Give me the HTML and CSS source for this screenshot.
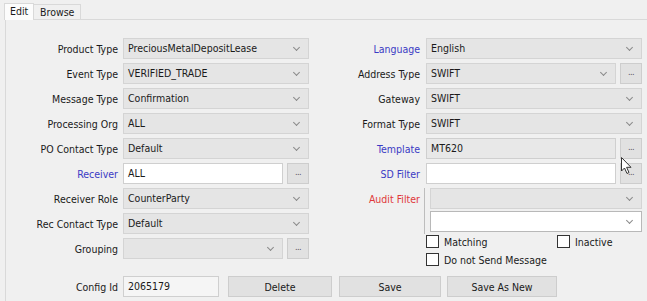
FILE: index.html
```html
<!DOCTYPE html>
<html lang="en">
<head>
  <meta charset="UTF-8">
  <title>Message Config</title>
  <link rel="stylesheet" href="styles.css">
</head>
<body>

  <div class="tabs">
    <span class="tab is-active">Edit</span>
    <span class="tab">Browse</span>
  </div>

  <div class="panel">
    <div class="form">

      <div class="col is-left">
        <label class="label">Product Type</label>
        <div class="combo">PreciousMetalDepositLease</div>

        <label class="label">Event Type</label>
        <div class="combo">VERIFIED_TRADE</div>

        <label class="label">Message Type</label>
        <div class="combo">Confirmation</div>

        <label class="label">Processing Org</label>
        <div class="combo">ALL</div>

        <label class="label">PO Contact Type</label>
        <div class="combo">Default</div>

        <label class="label is-link">Receiver</label>
        <div class="pair">
          <div class="field">ALL</div>
          <button type="button" class="dots">...</button>
        </div>

        <label class="label">Receiver Role</label>
        <div class="combo">CounterParty</div>

        <label class="label">Rec Contact Type</label>
        <div class="combo">Default</div>

        <label class="label">Grouping</label>
        <div class="pair">
          <div class="combo"></div>
          <button type="button" class="dots">...</button>
        </div>
      </div>

      <div class="col is-right">
        <label class="label is-link">Language</label>
        <div class="combo">English</div>

        <label class="label">Address Type</label>
        <div class="pair">
          <div class="combo">SWIFT</div>
          <button type="button" class="dots">...</button>
        </div>

        <label class="label">Gateway</label>
        <div class="combo">SWIFT</div>

        <label class="label">Format Type</label>
        <div class="combo">SWIFT</div>

        <label class="label is-link">Template</label>
        <div class="pair">
          <div class="field is-disabled">MT620</div>
          <button type="button" class="dots">...</button>
        </div>

        <label class="label is-link">SD Filter</label>
        <div class="pair">
          <div class="field"></div>
          <button type="button" class="dots">...</button>
        </div>

        <label class="label is-alert">Audit Filter</label>
        <div class="audit">
          <div class="combo"></div>
          <div class="combo is-white"></div>
        </div>

        <div class="checks">
          <span class="check">Matching</span>
          <span class="check">Inactive</span>
          <span class="check">Do not Send Message</span>
        </div>
      </div>

    </div>

    <div class="footer">
      <label class="label">Config Id</label>
      <div class="field is-id">2065179</div>
      <button type="button" class="button is-delete">Delete</button>
      <button type="button" class="button is-save">Save</button>
      <button type="button" class="button is-new">Save As New</button>
    </div>
  </div>

  <svg class="pointer" width="12" height="18" viewBox="0 0 12 18">
    <path d="M0.5 0.5 L0.5 14 L3.5 11 L6 16.5 L8 15.5 L5.6 10.3 L10 10.3 Z" fill="#fff" stroke="#333" stroke-width="1"/>
  </svg>

</body>
</html>
```

FILE: styles.css
```css
html, body {
  height: 100%;
}
body {
  margin: 0;
  background: #f0f0f0;
  font-family: "DejaVu Sans Condensed", "DejaVu Sans", sans-serif;
  font-size: 10.5px;
  color: #1a1a1a;
  position: relative;
  overflow: hidden;
}

/* tabs */
.tabs {
  display: flex;
  align-items: flex-end;
  height: 19px;
  padding-left: 4px;
}
.tab {
  box-sizing: border-box;
  height: 15px;
  padding: 0 6px;
  line-height: 14px;
  border: 1px solid #d9d9d9;
  border-bottom: none;
  background: #f0f0f0;
}
.tab.is-active {
  height: 17px;
  width: 30px;
  padding: 0 5px;
  background: #fcfcfc;
  position: relative;
  top: 1px;
  line-height: 15px;
}
.tab + .tab {
  border-left: none;
}

/* panel */
.panel {
  margin-left: 5px;
  border: 1px solid #d9d9d9;
  border-right: none;
  height: 290px;
  background: #f0f0f0;
}
.form {
  box-sizing: border-box;
  display: flex;
  height: 239px;
  padding-top: 18px;
}
.col {
  display: grid;
  grid-auto-rows: 21px;
  row-gap: 4px;
  align-items: center;
  align-content: start;
}
.col.is-left {
  grid-template-columns: 112px 186px;
  column-gap: 5px;
}
.col.is-right {
  grid-template-columns: 111px 216px;
  column-gap: 6px;
}
.label {
  text-align: right;
  white-space: nowrap;
}
.label.is-link {
  color: #3b3bc4;
}
.label.is-alert {
  color: #e0383a;
}

/* controls */
.combo,
.field {
  box-sizing: border-box;
  height: 21px;
  line-height: 19px;
  padding-left: 4px;
  border: 1px solid #d4d4d4;
  white-space: nowrap;
  overflow: hidden;
}
.combo {
  position: relative;
  background: #e5e5e5;
}
.combo::after {
  content: "";
  position: absolute;
  right: 9px;
  top: 6px;
  width: 4px;
  height: 4px;
  border-right: 1px solid #8a8a8a;
  border-bottom: 1px solid #8a8a8a;
  transform: rotate(45deg);
}
.combo.is-white {
  background: #fff;
  border-color: #b8b8b8;
}
.field {
  background: #fff;
  border-color: #cfcfcf;
}
.field.is-disabled {
  background: #e8e8e8;
}
.pair {
  display: flex;
  gap: 4px;
  height: 21px;
}
.pair > .combo,
.pair > .field {
  flex: 1;
}
.dots {
  box-sizing: border-box;
  width: 22px;
  height: 21px;
  padding: 0 0 4px;
  border: 1px solid #cdcdcd;
  background: #e1e1e1;
  font: inherit;
  font-size: 9px;
  color: #555;
  letter-spacing: -0.5px;
}

/* audit filter spans two rows */
.audit {
  grid-column: 2;
  grid-row: span 2;
  align-self: start;
  display: flex;
  flex-direction: column;
  gap: 2px;
  margin-left: -2px;
  padding-left: 5px;
  border-left: 1px solid #bdbdbd;
  height: 46px;
}
.col.is-right .label.is-alert {
  align-self: start;
  padding-top: 5px;
}

/* checkboxes */
.checks {
  grid-column: 2;
  grid-row: span 2;
  align-self: start;
  display: grid;
  grid-template-columns: 131px 1fr;
  row-gap: 5px;
  margin-top: -3px;
}
.check {
  display: flex;
  align-items: center;
  gap: 5px;
  height: 13px;
}
.check::before {
  content: "";
  box-sizing: border-box;
  width: 13px;
  height: 13px;
  border: 1px solid #333;
  background: #fff;
}

/* footer */
.footer {
  display: flex;
  align-items: center;
  margin-top: 17px;
}
.footer .label {
  width: 112px;
  margin-right: 5px;
}
.field.is-id {
  width: 96px;
  background: #f5f5f5;
  margin-right: 9px;
}
.button {
  box-sizing: border-box;
  height: 21px;
  border: 1px solid #cdcdcd;
  background: #e1e1e1;
  font: inherit;
  color: #1a1a1a;
}
.button.is-delete {
  width: 104px;
  margin-right: 7px;
}
.button.is-save {
  width: 102px;
  margin-right: 6px;
}
.button.is-new {
  width: 110px;
}

/* mouse pointer captured in the shot */
.pointer {
  position: absolute;
  left: 621px;
  top: 157px;
}
```
